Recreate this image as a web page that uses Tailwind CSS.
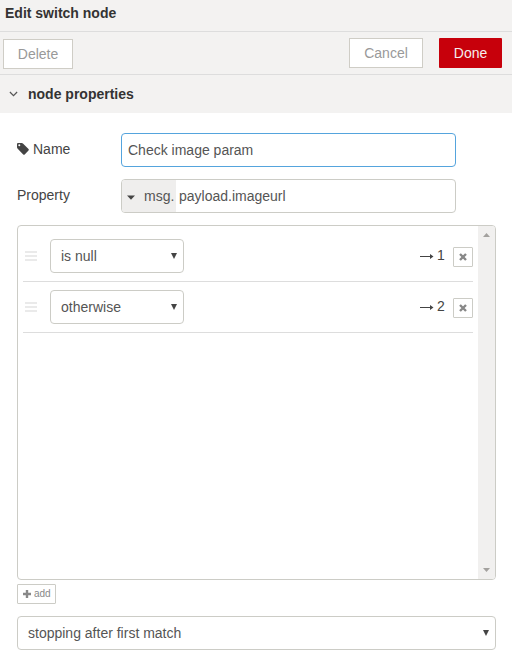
<!DOCTYPE html>
<html lang="en">
<head>
<meta charset="utf-8">
<title>Edit switch node</title>
<script src="https://cdn.jsdelivr.net/npm/@tailwindcss/browser@4"></script>
</head>
<body class="w-[512px] h-[667px] overflow-hidden bg-white font-['Liberation_Sans',Arial,sans-serif] text-[14px] leading-[20px] text-[#555]">
<header class="h-[32px] bg-[#f3f2f1] border-b border-[#dddddd] pl-[5px] pt-[3px] font-bold text-[#333]"><span>Edit switch node</span></header>
<div class="h-[43px] bg-[#f3f2f1] border-b border-[#dddddd] flex items-start pt-[6px] pl-[3px] pr-[10px] text-[#999]">
  <button class="mt-px w-[70px] h-[30px] bg-white border border-[#cfcdc6]">Delete</button>
  <button class="ml-auto w-[74px] h-[30px] bg-white border border-[#cfcdc6]">Cancel</button>
  <button class="ml-[16px] w-[63px] h-[30px] rounded-[1px] bg-[#c7000b] text-[#f5eeee]">Done</button>
</div>
<div class="h-[38px] bg-[#f3f2f1] flex items-center pl-[9px] font-bold text-[#333]">
  <svg class="w-[9px] h-[6px] mr-[10px]" viewBox="0 0 9 6" fill="none" stroke="#555" stroke-width="1.2"><path d="M.9 1 4.5 4.6 8.1 1"/></svg>
  <span>node properties</span>
</div>
<main class="px-[17px] pt-[20px]">
  <div class="flex h-[34px] mb-[12px]">
    <label class="w-[104px] flex items-center pb-[2px] text-[#444]">
      <svg class="w-[12px] h-[12px] mr-[4px]" viewBox="0 0 12 12" fill="#444" fill-rule="evenodd"><path d="M0 1Q0 0 1 0H4.7Q5.5 0 6.2.7L11.5 6Q12.2 6.8 11.5 7.5L7.7 11.5Q7 12.1 6.2 11.5L.7 5.7Q0 5 0 4.3ZM1.3 2.2A1 1 0 1 0 3.3 2.2 1 1 0 1 0 1.3 2.2"/></svg>Name</label>
    <div class="w-[335px] border border-[#55a4dd] rounded-[4px] px-[6px] flex items-center">Check image param</div>
  </div>
  <div class="flex h-[34px] mb-[12px]">
    <label class="w-[104px] flex items-center pb-[2px] text-[#444]">Property</label>
    <div class="w-[335px] border border-[#ccccc6] rounded-[4px] flex items-center overflow-hidden">
      <div class="w-[54px] h-full bg-[#efeeed] flex items-center pl-[5px]">
        <svg class="w-[8px] h-[5px] mr-[9px] mt-[3px]" viewBox="0 0 8 5" fill="#444"><path d="M0 .5H8L4 4.8Z"/></svg>msg.</div>
      <span class="pl-[3px]">payload.imageurl</span>
    </div>
  </div>
  <section class="w-[479px] h-[355px] border border-[#ccccc6] rounded-[4px] flex overflow-hidden">
    <ol class="w-[450px] ml-[5px] mr-[5px] pt-[5px]">
      <li class="h-[51px] border-b border-[#dddddd] flex items-center">
        <svg class="w-[12px] h-[10px] ml-[2px] mr-[13px]" viewBox="0 0 12 10" fill="#eaeaea" shape-rendering="crispEdges"><path d="M0 0H12V2H0ZM0 4H12V6H0ZM0 8H12V10H0Z"/></svg>
        <div class="w-[134px] h-[34px] border border-[#ccccc6] rounded-[4px] flex items-center justify-between pl-[10px] pr-[6px]"><span>is null</span><svg class="w-[6px] h-[6px]" viewBox="0 0 6 6" fill="#444"><path d="M0 0H6L3 6Z"/></svg></div>
        <svg class="w-[14px] h-[6px] ml-auto mr-[3px]" viewBox="0 0 14 6" fill="#444"><path d="M0 3H10V1L13.5 3.5 10 6V4H0Z"/></svg>
        <span class="w-[8px] mb-[2px] text-[#444]">1</span>
        <button class="w-[20px] h-[20px] ml-[8px] mt-[2px] border border-[#ccccc6] rounded-[1px] flex items-center justify-center"><svg class="w-[8px] h-[8px]" viewBox="0 0 8 8" stroke="#888" stroke-width="2.4"><path d="M1 1 7 7M7 1 1 7"/></svg></button>
      </li>
      <li class="h-[51px] border-b border-[#dddddd] flex items-center">
        <svg class="w-[12px] h-[10px] ml-[2px] mr-[13px]" viewBox="0 0 12 10" fill="#eaeaea" shape-rendering="crispEdges"><path d="M0 0H12V2H0ZM0 4H12V6H0ZM0 8H12V10H0Z"/></svg>
        <div class="w-[134px] h-[34px] border border-[#ccccc6] rounded-[4px] flex items-center justify-between pl-[10px] pr-[6px]"><span>otherwise</span><svg class="w-[6px] h-[6px]" viewBox="0 0 6 6" fill="#444"><path d="M0 0H6L3 6Z"/></svg></div>
        <svg class="w-[14px] h-[6px] ml-auto mr-[3px]" viewBox="0 0 14 6" fill="#444"><path d="M0 3H10V1L13.5 3.5 10 6V4H0Z"/></svg>
        <span class="w-[8px] mb-[2px] text-[#444]">2</span>
        <button class="w-[20px] h-[20px] ml-[8px] mt-[2px] border border-[#ccccc6] rounded-[1px] flex items-center justify-center"><svg class="w-[8px] h-[8px]" viewBox="0 0 8 8" stroke="#888" stroke-width="2.4"><path d="M1 1 7 7M7 1 1 7"/></svg></button>
      </li>
    </ol>
    <div class="w-[17px] bg-[#f1f0ef] flex flex-col items-center justify-between pt-[7px] pb-[7px]">
      <svg class="w-[7px] h-[4px]" viewBox="0 0 7 4" fill="#a3a19e"><path d="M0 4H7L3.5 0Z"/></svg>
      <svg class="w-[7px] h-[4px]" viewBox="0 0 7 4" fill="#a3a19e"><path d="M0 0H7L3.5 4Z"/></svg>
    </div>
  </section>
  <button class="mt-[4px] w-[39px] h-[20px] border border-[#ccccc6] rounded-[1px] flex items-center pl-[5px] text-[10px] text-[#888]"><svg class="w-[8px] h-[8px] mr-[3px] mb-px" viewBox="0 0 8 8" stroke="#888" stroke-width="2.4"><path d="M4 0V8M0 4H8"/></svg>add</button>
  <div class="mt-[12px] w-[479px] h-[34px] border border-[#ccccc6] rounded-[4px] flex items-center justify-between pl-[10px] pr-[6px]"><span>stopping after first match</span><svg class="w-[6px] h-[6px]" viewBox="0 0 6 6" fill="#444"><path d="M0 0H6L3 6Z"/></svg></div>
</main>
</body>
</html>
